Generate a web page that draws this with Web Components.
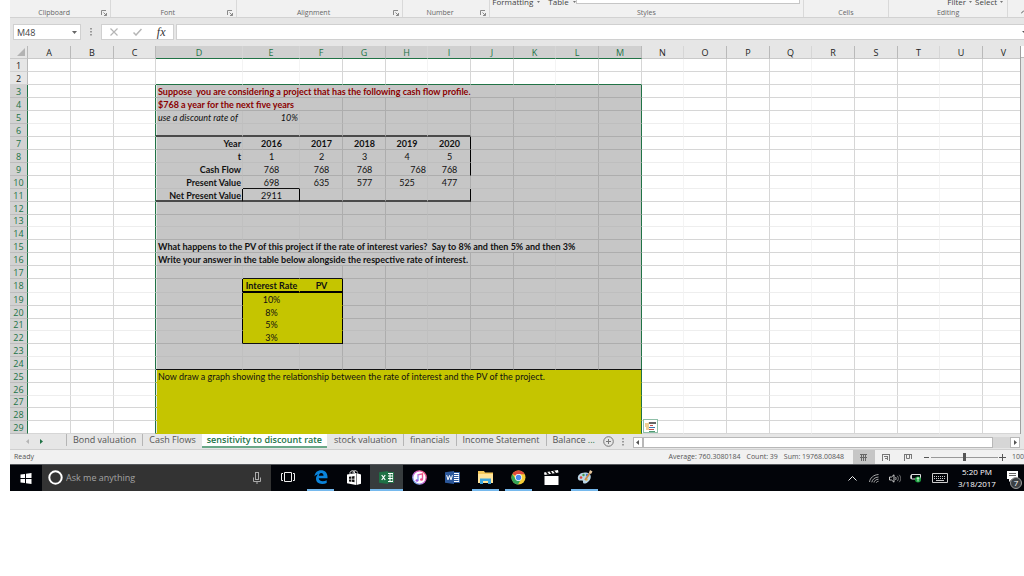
<!DOCTYPE html>
<html lang="en">
<head>
<meta charset="utf-8">
<title>Sensitivity to discount rate</title>
<style>
  body { margin: 0; background: #fff; font-family: "Open Sans", "Noto Sans", sans-serif; }
</style>
</head>
<body>
<sheet-app></sheet-app>

<script>
const base = `
  *, *::before, *::after { box-sizing: border-box; }
  button, input { font: inherit; color: inherit; border: 0; padding: 0; margin: 0; background: none; border-radius: 0; }
  button { display: flex; align-items: center; justify-content: center; }
  svg { display: block; flex: none; }
`;
function define(name, css, html) {
  customElements.define(name, class extends HTMLElement {
    connectedCallback() {
      if (this.shadowRoot) return;
      const root = this.attachShadow({ mode: 'open' });
      root.innerHTML = `<style>${base}${css}</style>${typeof html === 'function' ? html(this) : html}`;
    }
  });
}

/* ---------- ribbon ---------- */
define('ribbon-group', `
  :host { display: flex; flex-direction: column; justify-content: flex-end; min-width: 0; border-right: 1px solid #d9d9d9; }
  .top { display: flex; height: 12px; align-items: center; justify-content: center; font-size: 8px; line-height: 12px; color: #444; white-space: pre; }
  .foot { display: flex; align-items: center; height: 9px; font-size: 7px; line-height: 9px; color: #666; }
  .name { flex: 1; text-align: center; }
  button { width: 12px; height: 9px; }
`, el => `
  <div class="top"><slot></slot></div>
  <div class="foot"><span class="name">${el.getAttribute('label')}</span>
  ${el.hasAttribute('launcher') ? `<button aria-label="${el.getAttribute('label')} settings"><svg width="6" height="6" viewBox="0 0 6 6" fill="none" stroke="#8a8a8a"><path d="M.5 5V.5H5M2.5 2.5l3 3M5.500 3v2.500H3"/></svg></button>` : ''}
  </div>`);

const caret = '<svg width="3" height="2" viewBox="0 0 3 2"><path d="M0 0h3L1.500 2z" fill="#777"/></svg>';
define('app-ribbon', `
  :host { display: flex; height: 18px; overflow: hidden; background: #f1f1f1; border-bottom: 1px solid #d2d2d2; align-items: flex-end; }
  ribbon-group { height: 22px; flex: 1 1 0; }
  .pair { display: flex; gap: 4px; width: 100%; align-items: center; padding-left: 3px; }
  .pair svg:not(:last-child) { margin-right: 4px; }
  .pair.right { justify-content: flex-end; padding-right: 4px; gap: 3px; }
  .pair.right svg { margin: 0; }
  .gallery { flex: none; width: 224px; height: 8px; border: solid #c6c6c6; border-width: 0 1px 1px; background: #fff; margin-right: 4px; align-self: flex-start; }
  .end { flex: 16 1 0; height: 17px; display: flex; align-items: center; justify-content: flex-end; padding-top: 8px; }
`, `
  <ribbon-group label="Clipboard" launcher style="flex-grow:101"></ribbon-group>
  <ribbon-group label="Font" launcher style="flex-grow:126"></ribbon-group>
  <ribbon-group label="Alignment" launcher style="flex-grow:166"></ribbon-group>
  <ribbon-group label="Number" launcher style="flex-grow:87"></ribbon-group>
  <ribbon-group label="Styles" style="flex-grow:315"><div class="pair"><span>Formatting</span>${caret}<span>Table</span>${caret}</div><div class="gallery"></div></ribbon-group>
  <ribbon-group label="Cells" style="flex-grow:85"></ribbon-group>
  <ribbon-group label="Editing" style="flex-grow:119"><div class="pair right"><span>Filter</span>${caret}<span>Select</span>${caret}</div></ribbon-group>
  <div class="end"><svg width="3" height="5" viewBox="0 0 3 5" fill="none" stroke="#555"><path d="M0 3.500l3-3"/></svg></div>
`);

/* ---------- formula bar ---------- */
define('formula-bar', `
  :host { display: flex; height: 28px; padding: 6px 0 6px 3px; background: #e6e6e6; }
  .name { display: flex; width: 68px; background: #fff; border: 1px solid #d0d0d0; }
  .name input { flex: 1; min-width: 0; padding-left: 3px; font-size: 9px; color: #444; }
  .name button { width: 12px; }
  .grip { width: 20px; display: flex; align-items: center; justify-content: center; }
  .tools { display: flex; width: 73px; background: #fff; border: 1px solid #d0d0d0; }
  .tools button { flex: 1; }
  .entry { display: flex; align-items: center; flex: 1; min-width: 0; margin-left: 2px; background: #fff; border: 1px solid #d0d0d0; border-right: 0; }
  .entry input { flex: 1; min-width: 0; font-size: 9px; }
  .fx { font: italic 12px/12px "Liberation Serif", serif; color: #333; }
`, `
  <div class="name"><input aria-label="Name box" value="M48"><button aria-label="Open name list"><svg width="5" height="3" viewBox="0 0 5 3"><path d="M0 0h5L2.500 3z" fill="#666"/></svg></button></div>
  <div class="grip"><svg width="2" height="8" viewBox="0 0 2 8" fill="#999"><path d="M0 0h2v1.500H0zM0 3h2v1.500H0zM0 6h2v1.500H0z"/></svg></div>
  <div class="tools">
    <button aria-label="Cancel"><svg width="8" height="8" viewBox="0 0 8 8" stroke="#b5b5b5" stroke-width="1.200"><path d="M.5.5l7 7M7.500.5l-7 7"/></svg></button>
    <button aria-label="Enter"><svg width="9" height="8" viewBox="0 0 9 8" fill="none" stroke="#b5b5b5" stroke-width="1.500"><path d="M.5 4.500L3 7l5.500-6"/></svg></button>
    <button aria-label="Insert function"><span class="fx">fx</span></button>
  </div>
  <div class="entry"><input aria-label="Formula"><svg width="2" height="3" viewBox="0 0 2 3"><path d="M0 0h2v2z" fill="#555"/></svg></div>
`);

/* ---------- grid ---------- */
const COLS = 'ABCDEFGHIJKLMNOPQRSTUV'.split('');
const WIDTHS = [43, 43, 42, 87, 57, 43, 43, 42, 43, 43, 42, 43, 43, 42, 43, 43, 42, 43, 43, 42, 43];
const CELLS = {
  D3: ['Suppose  you are considering a project that has the following cash flow profile.', 'b red', 8],
  D4: ['$768 a year for the next five years', 'b red', 3],
  D5: ['use a discount rate of', 'i'], E5: ['10%', 'i r'],
  D7: ['Year', 'b r'], E7: ['2016', 'b c'], F7: ['2017', 'b c'], G7: ['2018', 'b c'], H7: ['2019', 'b c'], I7: ['2020', 'b c'],
  D8: ['t', 'b r'], E8: ['1', 'c'], F8: ['2', 'c'], G8: ['3', 'c'], H8: ['4', 'c'], I8: ['5', 'c'],
  D9: ['Cash Flow', 'b r'], E9: ['768', 'c'], F9: ['768', 'c'], G9: ['768', 'c'], H9: ['768', 'r'], I9: ['768', 'c'],
  D10: ['Present Value', 'b r'], E10: ['698', 'c'], F10: ['635', 'c'], G10: ['577', 'c'], H10: ['525', 'c'], I10: ['477', 'c'],
  D11: ['Net Present Value', 'b r'], E11: ['2911', 'c'],
  D15: ['What happens to the PV of this project if the rate of interest varies?  Say to 8% and then 5% and then 3%', 'b', 9],
  D16: ['Write your answer in the table below alongside the respective rate of interest.', 'b', 6],
  E18: ['Interest Rate', 'b c'], F18: ['PV', 'b c'],
  E19: ['10%', 'c'], E20: ['8%', 'c'], E21: ['5%', 'c'], E22: ['3%', 'c'],
  D25: ['Now draw a graph showing the relationship between the rate of interest and the PV of the project.', '', 10]
};
const FAINT_COLS = 'DEHKNQT', FAINT_ROWS = [5, 8, 10, 13, 18, 21, 23, 26], SHORT_ROWS = [13, 21, 27];

function cellClasses(col, row, end) {
  const c = [];
  const at = COLS.indexOf(col), sel = row >= 3 && at >= 3 && at <= 12;
  const inTable = at >= 3 && at <= 8, inBox = col === 'E' || col === 'F';
  if (sel) c.push('sel');
  if (FAINT_COLS.includes(end)) c.push('fv');
  if (FAINT_ROWS.includes(row)) c.push('fh');
  if (row === 2 && at >= 3 && at <= 12) c.push('seltop');
  if (row >= 3 && (end === 'C' || end === 'M')) c.push('selside');
  if (sel && col === 'D') c.push('inner');
  if (row >= 25 && sel || row >= 18 && row <= 22 && inBox) c.push('yellow');
  if ((row === 6 || row === 11) && inTable) c.push('thick');
  if (end === 'I' && [7, 8, 9, 11].includes(row)) c.push('side');
  if (row === 11 && (col === 'D' || col === 'E')) c.push('side');
  if (row === 10 && col === 'E') c.push('line');
  if (row === 24 && sel) c.push('line');
  if (row >= 18 && row <= 22 && (col === 'D' || col === 'F')) c.push('side');
  if ((row === 17 || row === 22) && inBox) c.push('line');
  if (row === 18 && inBox) c.push('heavy');
  return c;
}

define('sheet-grid', `
  :host { display: flex; background: #fff; }
  .view { flex: 1; min-width: 0; overflow: hidden; }
  table { width: 100%; min-width: 1015px; table-layout: fixed; border-collapse: separate; border-spacing: 0; font-size: 9px; }
  tr { height: 13px; }
  th, td { height: 13px; padding: 2px 1px 0; line-height: 10px; white-space: pre; overflow: hidden; border: solid #d6d6d6; border-width: 0 1px 1px 0; vertical-align: top; }
  tr.short { height: 12px; }
  tr.short > * { height: 12px; padding-top: 1px; }
  td { font-family: Lato, "Open Sans", sans-serif; color: #111; }
  td:not(.r) { padding-left: 2px; }
  th { font-weight: 400; background: #e6e6e6; color: #222; text-align: center; }
  thead th { border-right-color: #b9b9b9; border-bottom-color: #c9c9c9; }
  thead th.on { background: #d0d0d0; color: #217346; border-bottom-color: #217346; }
  thead th.pre { border-right-color: #d6d6d6; }
  tbody th { border-color: #d2d2d2; border-right-color: #b9b9b9; }
  tbody th.on { background: #d2d2d2; color: #217346; border-right-color: #217346; border-bottom-color: #bdbdbd; }
  .corner svg { margin: 0 1px 0 auto; }
  td.fv { border-right-color: #f4f4f4; }
  td.fh { border-bottom-color: #eee; }
  td.sel { background: #c6c6c6; border-color: #adadad; }
  td.sel.fv { border-right-color: #c0c0c0; }
  td.sel.fh { border-bottom-color: #bebebe; }
  td.inner { box-shadow: inset 1px 0 #e4e8e4; }
  td.seltop { border-bottom-color: #217346; }
  td.yellow.sel { background: #c5c500; border-color: #c5c500; }
  td.sel.selside, td.selside { border-right-color: #217346; }
  td.sel.thick { border-bottom: 2px solid #4a4a4a; line-height: 9px; }
  td.sel.line { border-bottom-color: #111; }
  td.sel.heavy { border-bottom: 2px solid #000; }
  td.sel.side { border-right-color: #000; }
  .b { font-weight: 700; } .i { font-style: italic; } td.red { color: #8b0000; }
  .c { text-align: center; } .r { text-align: right; }
  td.host { position: relative; overflow: visible; z-index: 1; }
  .paste { position: absolute; left: 1px; top: -2px; width: 15px; height: 14px; background: #fff; border: 1px solid #8fbfa8; }
  .bar { width: 4px; background: #e6e6e6; border-left: 1px solid #a0a0a0; }
  .bar i { display: block; height: 12px; background: #fff; border-bottom: 1px solid #bbb; }
`, () => {
  let html = '<div class="view"><table aria-label="Worksheet"><colgroup><col style="width:18px">';
  html += COLS.map((c, i) => i < 21 ? `<col style="width:${WIDTHS[i]}px">` : '<col>').join('');
  html += '</colgroup><thead><tr><th class="corner" aria-label="Select all"><svg width="8" height="8" viewBox="0 0 8 8"><path d="M8 0v8H0z" fill="#b3b3b3"/></svg></th>';
  html += COLS.map((c, i) => `<th scope="col" class="${i >= 3 && i <= 12 ? 'on' : ''}${FAINT_COLS.includes(c) ? ' pre' : ''}">${c}</th>`).join('') + '</tr></thead><tbody>';
  for (let r = 1; r <= 29; r++) {
    html += `<tr${SHORT_ROWS.includes(r) ? ' class="short"' : ''}><th scope="row"${r >= 3 ? ' class="on"' : ''}>${r}</th>`;
    for (let i = 0; i < COLS.length;) {
      const col = COLS[i];
      let [text, cls, span] = CELLS[col + r] || ['', '', 1];
      if (r > 25 && col === 'D') span = 10;
      span = span || 1;
      const classes = cellClasses(col, r, COLS[i + span - 1]);
      if (cls) classes.push(cls);
      let extra = '';
      if (r === 29 && col === 'N') {
        classes.push('host');
        extra = '<button class="paste" aria-label="Quick analysis"><svg width="11" height="11" viewBox="0 0 11 11"><path d="M0 2h3l1-1v8H1V6H0z" fill="#f0cf94"/><path d="M4 1h7v2H4z" fill="#666"/><path d="M5 4h3v1H5z" fill="#c0504d"/><path d="M4 6h6v1H4z" fill="#3b78b8"/><path d="M4 8h5v1H4z" fill="#c0504d"/><path d="M4 10h6v1H4z" fill="#4f9b74"/></svg></button>';
      }
      html += `<td${span > 1 ? ` colspan="${span}"` : ''} class="${classes.join(' ')}">${text}${extra}</td>`;
      i += span;
    }
    html += '</tr>';
  }
  return html + '</tbody></table></div><div class="bar"><i></i></div>';
});

/* ---------- sheet tabs ---------- */
define('sheet-tabs', `
  :host { display: flex; height: 16px; background: #e6e6e6; border-bottom: 1px solid #cfcfcf; font-size: 9px; color: #555; overflow: hidden; }
  .nav { display: flex; width: 56px; padding-left: 10px; }
  .nav button { width: 14px; }
  .tabs { display: flex; }
  .tabs button { line-height: 12px; height: 12px; border-left: 1px solid #b5b5b5; padding: 0 6px; white-space: nowrap; }
  .tabs button.on { height: 14px; background: #fff; color: #217346; font-weight: 600; border: 0; border-bottom: 2px solid #6aa888; padding: 0 5px; }
  .tabs button.after { border-left-color: transparent; }
  .more { color: #217346; }
  .add { width: 16px; }
  .dots { width: 12px; display: flex; align-items: center; justify-content: center; }
  .scroll { flex: 1; display: flex; min-width: 0; margin: 3px 4px 1px 4px; background: #d6d6d6; }
  .scroll button { width: 10px; background: #fff; border: 1px solid #b8b8b8; }
  .thumb { flex: 1; background: #fff; border: 1px solid #b8b8b8; margin-right: 17px; }
`, `
  <div class="nav">
    <button aria-label="Previous sheets"><svg width="3" height="5" viewBox="0 0 3 5"><path d="M3 0v5L0 2.500z" fill="#b5b5b5"/></svg></button>
    <button aria-label="Next sheets"><svg width="3" height="5" viewBox="0 0 3 5"><path d="M0 0v5l3-2.500z" fill="#217346"/></svg></button>
  </div>
  <div class="tabs">
    <button>Bond valuation</button><button>Cash Flows</button><button class="on">sensitivity to discount rate</button><button class="after">stock valuation</button><button>financials</button><button>Income Statement</button><button>Balance <span class="more">&nbsp;...</span></button>
  </div>
  <button class="add" aria-label="New sheet"><svg width="11" height="11" viewBox="0 0 11 11" fill="none" stroke="#777"><circle cx="5.500" cy="5.500" r="4.800"/><path d="M5.500 3v5M3 5.500h5"/></svg></button>
  <div class="dots"><svg width="2" height="8" viewBox="0 0 2 8" fill="#999"><path d="M0 0h2v1.500H0zM0 3h2v1.500H0zM0 6h2v1.500H0z"/></svg></div>
  <div class="scroll"><button aria-label="Scroll left"><svg width="3" height="5" viewBox="0 0 3 5"><path d="M3 0v5L0 2.500z" fill="#555"/></svg></button><div class="thumb"></div><button aria-label="Scroll right"><svg width="3" height="5" viewBox="0 0 3 5"><path d="M0 0v5l3-2.500z" fill="#555"/></svg></button></div>
`);

/* ---------- status bar ---------- */
define('status-bar', `
  :host { display: flex; align-items: center; height: 14px; background: #f1f1f1; font-size: 7px; line-height: 14px; color: #555; padding-left: 4px; overflow: hidden; white-space: nowrap; }
  .stats { margin-left: auto; display: flex; gap: 6px; margin-right: 9px; }
  .views button { width: 22px; height: 14px; }
  .views { display: flex; }
  .views .on { background: #c6c6c6; }
  .zoom { display: flex; align-items: center; margin-left: 3px; }
  .zoom button { width: 9px; height: 14px; }
  input { appearance: none; width: 67px; height: 9px; background: linear-gradient(#999, #999) center / 100% 1px no-repeat; }
  input::-webkit-slider-thumb { appearance: none; width: 3px; height: 8px; background: #555; }
  .pct { margin-left: 5px; }
`, `
  <span>Ready</span>
  <div class="stats"><span>Average: 760.3080184</span><span>Count: 39</span><span>Sum: 19768.00848</span></div>
  <div class="views">
    <button class="on" aria-label="Normal"><svg width="7" height="7" viewBox="0 0 7 7" fill="none" stroke="#666"><path d="M0 .5h7M0 3.500h7M1.500 0v7M3.500 0v7M5.500 0v7"/></svg></button>
    <button aria-label="Page layout"><svg width="8" height="7" viewBox="0 0 8 7" fill="none" stroke="#777"><path d="M0 .5h8M.5 0v7M7.500 0v7M2 2.500h4M3 4.500h3M5.500 2v4"/></svg></button>
    <button aria-label="Page break preview"><svg width="8" height="7" viewBox="0 0 8 7" fill="none" stroke="#777"><path d="M0 .5h8M.5 0v7M7.500 0v5M2.500 0v4.500h3V0"/></svg></button>
  </div>
  <div class="zoom">
    <button aria-label="Zoom out"><svg width="5" height="5" viewBox="0 0 5 5" fill="#555"><path d="M0 2h5v1H0z"/></svg></button>
    <input type="range" aria-label="Zoom" min="0" max="100" value="50">
    <button aria-label="Zoom in"><svg width="7" height="7" viewBox="0 0 7 7" fill="#555"><path d="M0 3h3V0h1v3h3v1H4v3H3V4H0z"/></svg></button>
  </div>
  <span class="pct">100</span>
`);

/* ---------- taskbar ---------- */
define('task-button', `
  :host { display: flex; width: 33px; padding: 0 3px; }
  button { flex: 1; border-bottom: 2px solid transparent; }
  :host([open]) button { border-bottom-color: #76b9ed; }
  :host([active]) { background: #373c3e; padding: 0; }
`, el => `<button aria-label="${el.getAttribute('label')}"><slot></slot></button>`);

define('task-bar', `
  :host { display: flex; height: 27px; background: #020409; color: #fff; overflow: hidden; border-top: 1px solid #55585c; }
  .start { width: 32px; }
  .search { display: flex; align-items: center; width: 229px; background: #333; padding: 0 10px 1px 6px; gap: 3px; }
  .search input { flex: 1; min-width: 0; font-size: 9px; line-height: 14px; height: 16px; }
  .search input::placeholder { color: #a3a3a3; opacity: 1; }
  .apps { display: flex; }
  .tray { margin-left: auto; display: flex; align-items: center; }
  .tray button { width: 21px; height: 25px; }
  .tray .kb { width: 28px; }
  time { width: 46px; text-align: center; font-size: 8px; line-height: 12px; }
  .tray .note { position: relative; width: 24px; padding: 0 0 3px 6px; justify-content: flex-start; }
  .badge { position: absolute; left: 10px; top: 11px; width: 12px; height: 12px; border-radius: 6px; background: #3c4043; border: 1px solid #9a9a9a; font-size: 8px; line-height: 10px; text-align: center; }
`, `
  <button class="start" aria-label="Start"><svg width="12" height="11" viewBox="0 0 11 11" fill="#fff"><path d="M0 1.500L4.500 1v4H0zM5.500.8L11 0v5H5.500zM0 6h4.500v4L0 9.500zM5.500 6H11v5l-5.500-.8z"/></svg></button>
  <div class="search">
    <svg width="15" height="15" viewBox="0 0 15 15" fill="none" stroke="#fff" stroke-width="2"><circle cx="7.500" cy="7.500" r="6.200"/></svg>
    <input aria-label="Search" placeholder="Ask me anything">
    <button aria-label="Speak"><svg width="8" height="12" viewBox="0 0 8 12" fill="none" stroke="#aaa"><rect x="2.500" y=".5" width="3" height="7"/><path d="M.5 5.500v4h7v-4M4 9.500V12"/></svg></button>
  </div>
  <div class="apps">
    <task-button label="Task view"><svg width="14" height="10" viewBox="0 0 14 10" fill="none" stroke="#eee"><path d="M3.500.5h7v9h-7zM2 1.500H.5v7H2M12 1.500h1.500v7H12"/></svg></task-button>
    <task-button label="Edge" open><svg width="14" height="14" viewBox="0 0 14 14"><path d="M.5 6.500C1 2.500 3.500.3 7 .3c4 0 6.500 2.700 6.500 6.500v1.500H4.700c.2 2 2 2.900 4 2.900 1.500 0 2.900-.4 4-1v2.700c-1.200.7-2.700 1-4.500 1-4 0-6.200-2.200-6.200-5.200 0-2.100 1-3.700 2.800-4.700C2.800 4.500 1.500 5 .5 6.500zM4.900 5.800h4.600C9.500 4 8.600 3 7.200 3S5 4.100 4.900 5.800z" fill="#0a84dc"/></svg></task-button>
    <task-button label="Store"><svg width="14" height="15" viewBox="0 0 14 15"><path d="M0 4.500L9 3v12L0 13.300zM9.500 3L14 4.500v9.300L9.500 15z" fill="#fff"/><path d="M3 4V2.500C3 1 6.500 0 7.500 1.500V3M6 3c0-3 4-3 4.500-.5" fill="none" stroke="#ddd"/><path d="M2 6.800l2.300-.3v2.300H2zM4.900 6.400l2.600-.4v2.800H4.900zM2 9.400h2.300v2.300L2 11.400zM4.900 9.400h2.600v2.800l-2.600-.4z" fill="#111"/></svg></task-button>
    <task-button label="Excel" open active><svg width="15" height="13" viewBox="0 0 15 13"><path d="M7 1.500h7.500v10H7z" fill="#fff" stroke="#217346"/><path d="M8.500 3h2v1.500h-2zM11.500 3h2v1.500h-2zM8.500 5.500h2V7h-2zM11.500 5.500h2V7h-2zM8.500 8h2v2h-2zM11.500 8h2v2h-2z" fill="#217346"/><path d="M0 1.200L9 0v13L0 11.800z" fill="#1e7145"/><path d="M2.700 4l3.500 5M6.200 4L2.700 9" stroke="#fff" stroke-width="1.200"/></svg></task-button>
    <task-button label="iTunes"><svg width="15" height="15" viewBox="0 0 15 15"><defs><linearGradient id="it" x1="0" y1="1" x2="1" y2="0"><stop offset="0" stop-color="#5cc8f5"/><stop offset=".45" stop-color="#c86ad8"/><stop offset="1" stop-color="#fa5070"/></linearGradient></defs><circle cx="7.500" cy="7.500" r="6.700" fill="#fff" stroke="url(#it)" stroke-width="1.300"/><path d="M6 10.500V4.800l4.500-1v5.600" fill="none" stroke="url(#it)" stroke-width="1.400"/><ellipse cx="5" cy="10.500" rx="1.500" ry="1.200" fill="#a05be0"/><ellipse cx="9.500" cy="9.500" rx="1.500" ry="1.200" fill="#ef4d86"/></svg></task-button>
    <task-button label="Word"><svg width="15" height="13" viewBox="0 0 15 13"><path d="M7 1.500h7.500v10H7z" fill="#fff" stroke="#2b579a"/><path d="M9 3.500h4.500M9 5.500h4.500M9 7.500h4.500M9 9.500h4.500" stroke="#2b579a"/><path d="M0 1.200L9 0v13L0 11.800z" fill="#2b579a"/><path d="M1.700 4.200l1.300 4.600 1.500-4.300L6 8.800l1.400-4.600" fill="none" stroke="#fff"/></svg></task-button>
    <task-button label="File Explorer" open><svg width="15" height="13" viewBox="0 0 15 13"><path d="M0 0h6l1 1.500h8V12H0z" fill="#f5c95b"/><path d="M0 3h15v9H0z" fill="#ffe49a"/><path d="M2 13V7.500h11V13h-3v-3H5v3z" fill="#3da5dd"/></svg></task-button>
    <task-button label="Chrome" open><svg width="15" height="15" viewBox="0 0 15 15"><circle cx="7.500" cy="7.500" r="7" fill="#f5cd36"/><path d="M7.500 7.500L1.400 4A7 7 0 0 1 13.700 4.200H7.500z" fill="#de4a3c"/><path d="M1.400 4A7 7 0 0 0 7 14.500l3-5.300-5.200.3z" fill="#33a457"/><circle cx="7.500" cy="7.500" r="3.400" fill="#fff"/><circle cx="7.500" cy="7.500" r="2.700" fill="#4a87ee"/></svg></task-button>
    <task-button label="Movies"><svg width="15" height="15" viewBox="0 0 15 15"><path d="M.5 6h14v9H.5zM0 2.500L14 0l.5 2.500L.5 5z" fill="#fff"/><path d="M2.500 2l2 2.500M6 1.200l2 2.500M9.500.6l2 2.500" stroke="#111" stroke-width="1.500"/></svg></task-button>
    <task-button label="Paint" open><svg width="16" height="15" viewBox="0 0 16 15"><path d="M1 9C0 5 4 2 9 2.500c4 .4 5.500 3 4.500 6S9 14 7 13.500s0-3-2-3-3.300.5-4-1.500z" fill="#b9d6e6"/><circle cx="4" cy="7.500" r="1.300" fill="#d9463c"/><circle cx="6.500" cy="5" r="1.200" fill="#4b9b48"/><circle cx="10" cy="5" r="1.200" fill="#3c78c8"/><circle cx="9.500" cy="9.500" r="1.200" fill="#e8b93a"/><path d="M14 1.500L8 10" stroke="#c98a4b" stroke-width="1.800"/><path d="M13 0l2.500 1.500L14 4l-2-1.500z" fill="#e8c9a0"/></svg></task-button>
  </div>
  <div class="tray">
    <button aria-label="Show hidden icons"><svg width="9" height="5" viewBox="0 0 9 5" fill="none" stroke="#eee"><path d="M.5 4.500l4-4 4 4"/></svg></button>
    <button aria-label="Network"><svg width="10" height="9" viewBox="0 0 10 9" fill="none" stroke="#bbb" stroke-width=".9"><path d="M.5 8C1 4 4.500.8 9.500.5M2.800 8.300C3.300 5.500 5.500 3.300 9.500 3M5 8.500c.3-1.800 2-3.200 4.500-3.300M7.300 8.700c.2-.8 1-1.300 2.200-1.400"/></svg></button>
    <button aria-label="Volume"><svg width="12" height="9" viewBox="0 0 12 9" fill="none" stroke="#ddd" stroke-width=".9"><path d="M.5 3h2L5 .8v7.400L2.500 6h-2zM6.500 3c.7 1 .7 2 0 3"/><path d="M8.300 1.800c1.400 1.800 1.400 3.600 0 5.400M10.200.8c2 2.400 2 5 0 7.400" stroke="#888"/></svg></button>
    <button aria-label="Battery"><svg width="11" height="10" viewBox="0 0 11 10"><path d="M1.500 1.500h9V6h-9zM1 3H0v2h1" fill="none" stroke="#ddd"/><circle cx="8" cy="6.500" r="3" fill="#18a03c"/><path d="M8 4.500v4M6.800 6l1.200-1.500L9.200 6" fill="none" stroke="#fff" stroke-width=".8"/></svg></button>
    <button class="kb" aria-label="Touch keyboard"><svg width="16" height="10" viewBox="0 0 16 10" fill="none" stroke="#ccc"><path d="M.5.5h15v9H.5z"/><path d="M2 3.500h12M2 5.500h12" stroke-dasharray="1 1"/><path d="M4 7.500h8"/></svg></button>
    <time datetime="2017-03-18T17:20">5:20 PM<br>3/18/2017</time>
    <button class="note" aria-label="Notifications"><svg width="12" height="12" viewBox="0 0 12 12"><path d="M1 0h11v8H6L3 11V8H1z" fill="#fff"/><path d="M3 2.500h7M3 4.500h7" stroke="#666"/></svg><span class="badge">7</span></button>
  </div>
`);

define('sheet-app', `
  :host { display: block; margin-left: 10px; overflow: hidden; }
`, `
  <app-ribbon></app-ribbon>
  <formula-bar></formula-bar>
  <sheet-grid></sheet-grid>
  <sheet-tabs></sheet-tabs>
  <status-bar></status-bar>
  <task-bar></task-bar>
`);
</script>
</body>
</html>
